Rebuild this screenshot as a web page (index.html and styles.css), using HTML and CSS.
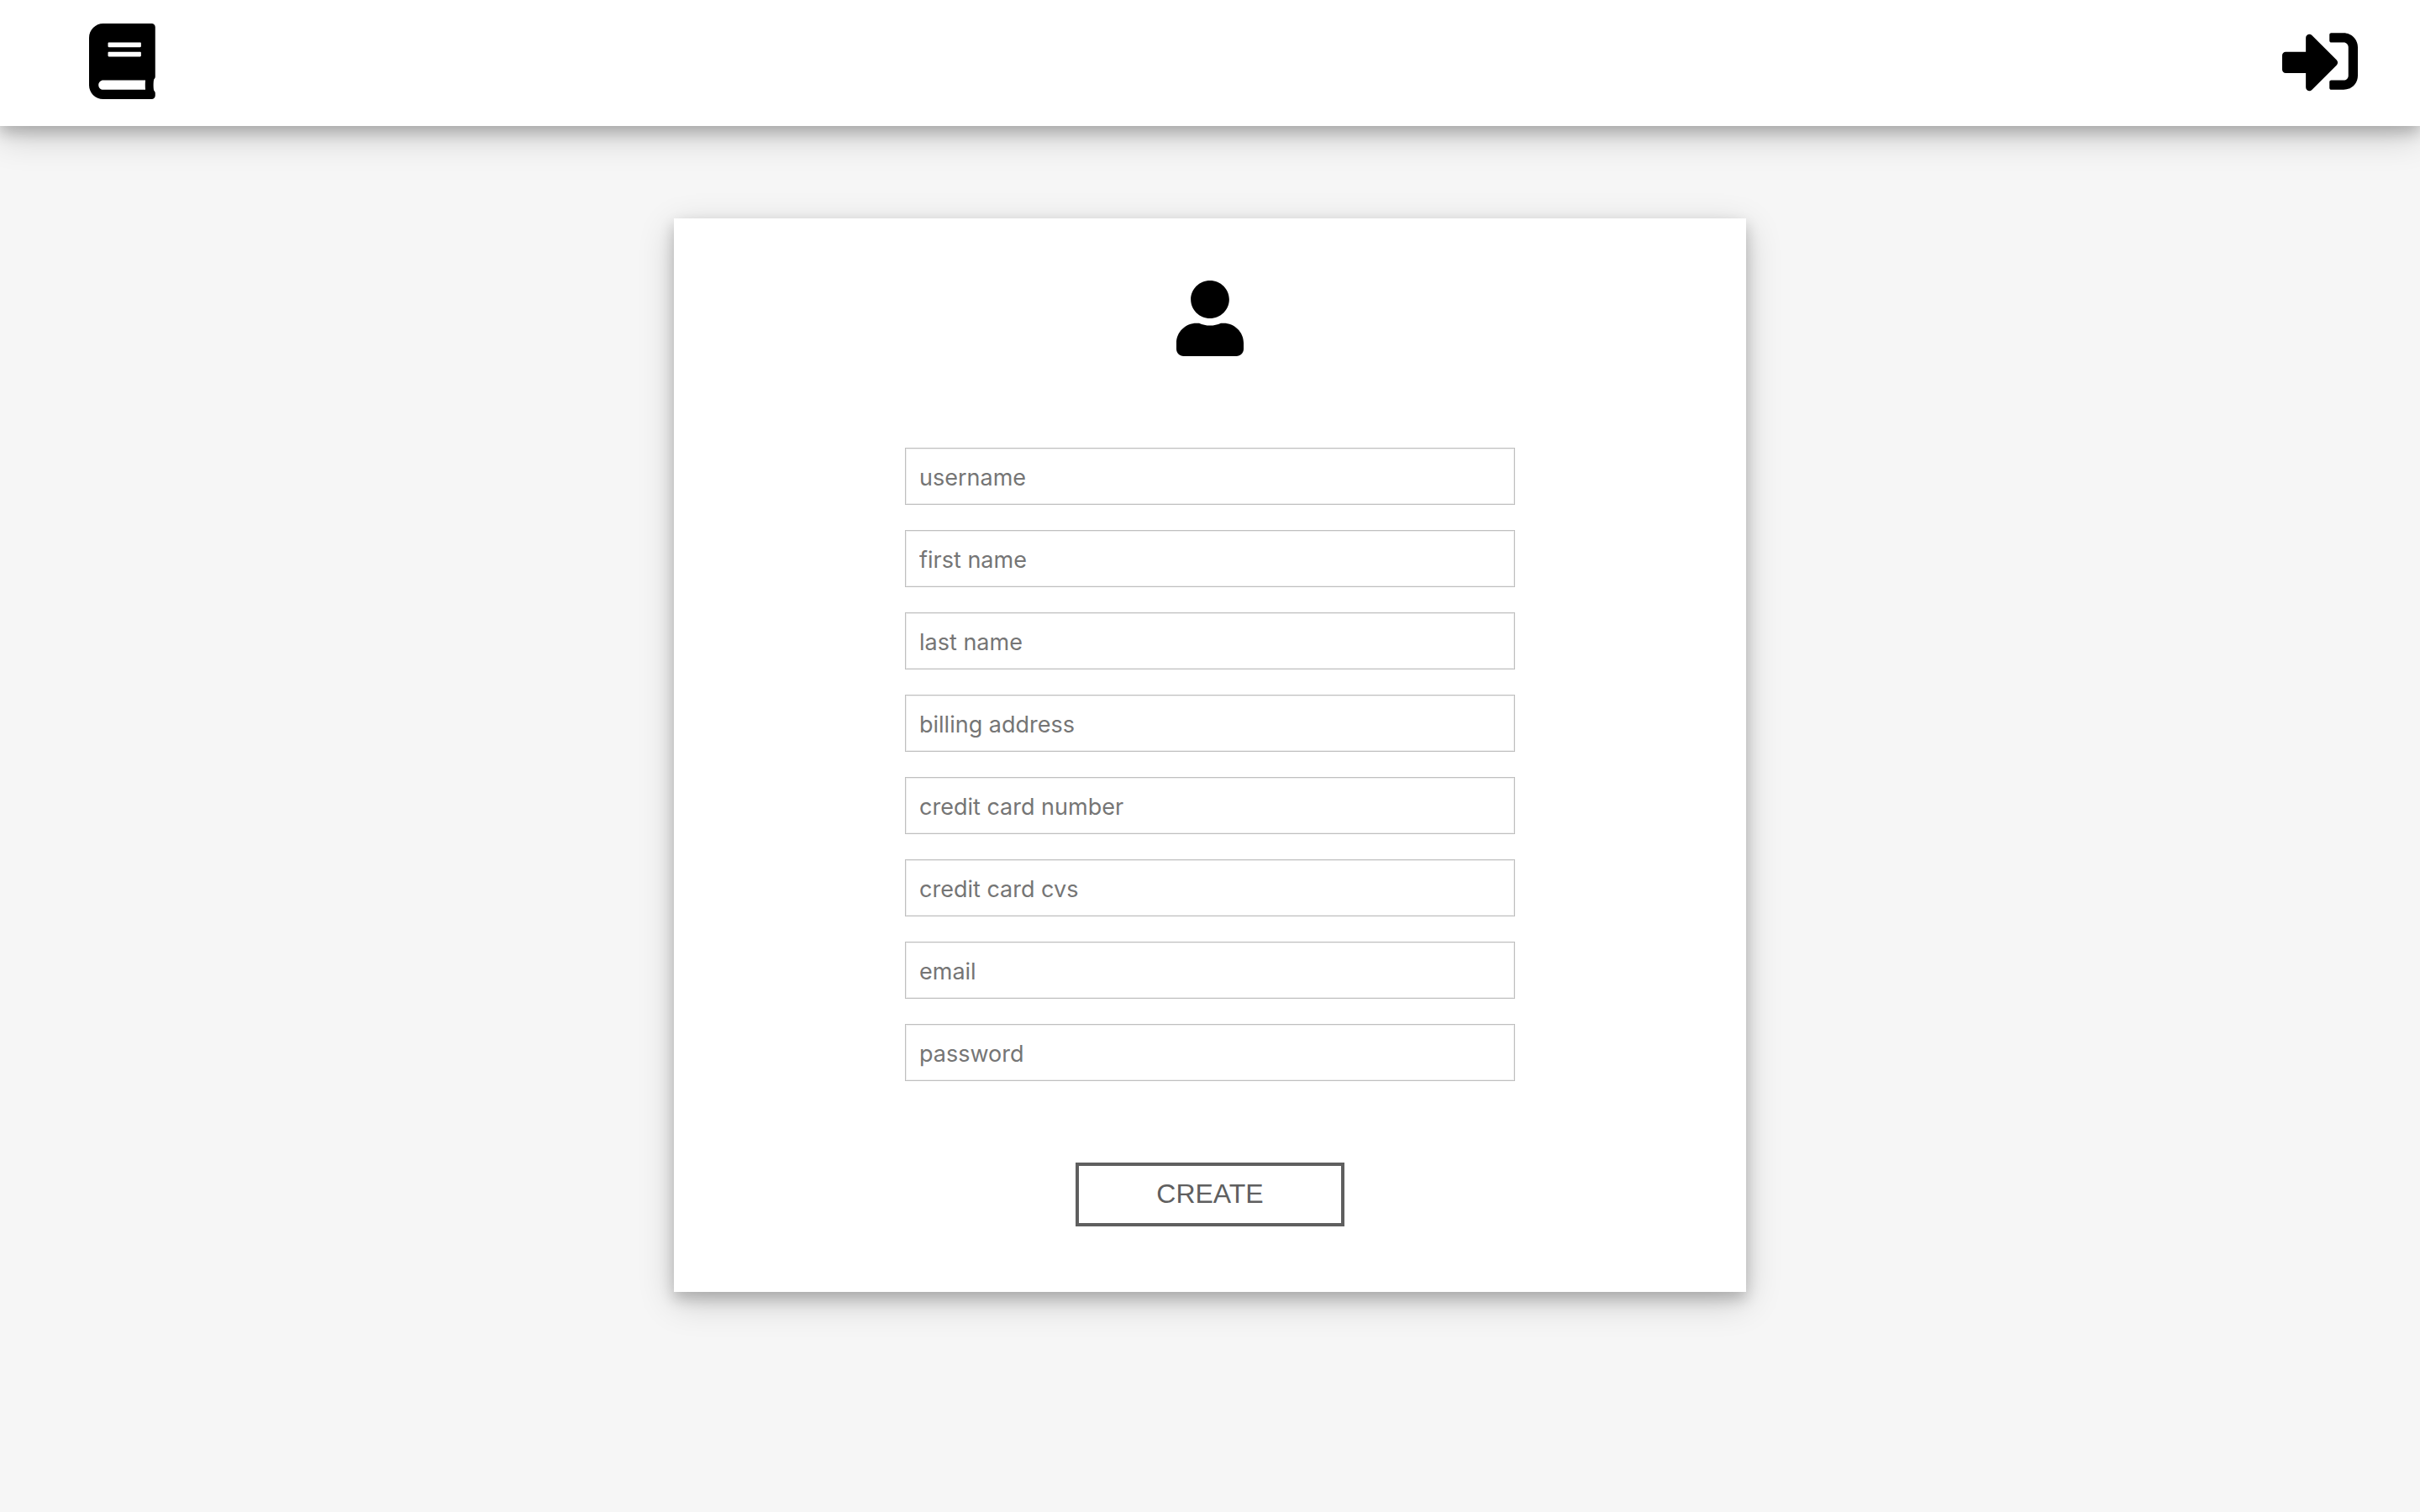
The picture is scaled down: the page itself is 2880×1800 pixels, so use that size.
FILE: index.html
```html
<!DOCTYPE html>
<html lang="en">
<head>
  <meta charset="utf-8">
  <meta name="viewport" content="width=device-width, initial-scale=1">
  <title>Create account</title>
  <link rel="stylesheet" href="styles.css">
</head>
<body>
  <header class="topbar">
    <a class="icon-link" href="#" aria-label="Home">
      <svg class="icon" viewBox="0 0 448 512" aria-hidden="true"><path d="M448 360V24c0-13.300-10.700-24-24-24H96C43 0 0 43 0 96v320c0 53 43 96 96 96h328c13.300 0 24-10.700 24-24v-16c0-7.500-3.500-14.300-8.900-18.700-4.200-15.400-4.200-59.300 0-74.700 5.400-4.300 8.900-11.100 8.900-18.600zM128 134c0-3.300 2.700-6 6-6h212c3.300 0 6 2.700 6 6v20c0 3.300-2.700 6-6 6H134c-3.300 0-6-2.700-6-6v-20zm0 64c0-3.300 2.700-6 6-6h212c3.300 0 6 2.700 6 6v20c0 3.300-2.700 6-6 6H134c-3.300 0-6-2.700-6-6v-20zm253.400 250H96c-17.700 0-32-14.300-32-32 0-17.600 14.400-32 32-32h285.400c-1.900 17.100-1.900 46.900 0 64z"/></svg>
    </a>
    <a class="icon-link" href="#" aria-label="Sign in">
      <svg class="icon" viewBox="0 0 512 512" aria-hidden="true"><path d="M416 448h-84c-6.600 0-12-5.400-12-12v-40c0-6.600 5.400-12 12-12h84c17.700 0 32-14.300 32-32V160c0-17.700-14.300-32-32-32h-84c-6.600 0-12-5.400-12-12V76c0-6.600 5.400-12 12-12h84c53 0 96 43 96 96v192c0 53-43 96-96 96zm-47-201L201 79c-15-15-41-4.500-41 17v96H24c-13.300 0-24 10.700-24 24v96c0 13.300 10.700 24 24 24h136v96c0 21.500 26 32 41 17l168-168c9.300-9.400 9.300-24.600 0-34z"/></svg>
    </a>
  </header>

  <main class="page">
    <form class="card">
      <svg class="icon avatar" viewBox="0 0 448 512" preserveAspectRatio="none" aria-hidden="true"><path d="M224 256c70.700 0 128-57.300 128-128S294.700 0 224 0 96 57.300 96 128s57.300 128 128 128zm89.600 32h-16.700c-22.200 10.200-46.900 16-72.900 16s-50.600-5.800-72.900-16h-16.700C60.200 288 0 348.200 0 422.400V464c0 26.500 21.500 48 48 48h352c26.500 0 48-21.500 48-48v-41.600c0-74.200-60.200-134.400-134.400-134.400z"/></svg>
      <div class="fields">
        <input class="field" type="text" name="username" placeholder="username" aria-label="username">
        <input class="field" type="text" name="first-name" placeholder="first name" aria-label="first name">
        <input class="field" type="text" name="last-name" placeholder="last name" aria-label="last name">
        <input class="field" type="text" name="billing-address" placeholder="billing address" aria-label="billing address">
        <input class="field" type="text" name="card-number" placeholder="credit card number" aria-label="credit card number">
        <input class="field" type="text" name="card-cvs" placeholder="credit card cvs" aria-label="credit card cvs">
        <input class="field" type="email" name="email" placeholder="email" aria-label="email">
        <input class="field" type="password" name="password" placeholder="password" aria-label="password">
      </div>
      <button class="create" type="submit">CREATE</button>
    </form>
  </main>
</body>
</html>
```
FILE: styles.css
```css
* {
  box-sizing: border-box;
}

body {
  margin: 0;
  background: #f6f6f6;
  font-family: "Liberation Sans", Arial, sans-serif;
}

.topbar,
.card {
  background: #fff;
  box-shadow: 0 8px 16px rgba(0, 0, 0, 0.2), 0 12px 40px rgba(0, 0, 0, 0.19);
}

.topbar {
  display: flex;
  justify-content: space-between;
  align-items: center;
  padding: 28px 74px 32px 106px;
}

.icon-link {
  display: flex;
  color: #000;
}

.icon {
  display: block;
  height: 90px;
  fill: #000;
}

.avatar {
  width: 80px;
}

.page {
  display: flex;
  justify-content: center;
  padding: 110px 32px;
}

.card {
  display: flex;
  flex-direction: column;
  align-items: center;
  width: 100%;
  max-width: 1276px;
  padding: 74px 32px 78px;
}

.fields {
  display: flex;
  flex-direction: column;
  gap: 30px;
  width: 100%;
  max-width: 726px;
  margin: 109px 0 97px;
}

.field {
  width: 100%;
  height: 68px;
  padding: 2px 16px 0;
  border: 1px solid #bfbfbf;
  border-radius: 0;
  background: #fff;
  box-shadow: inset 0 0 0 1px #eee;
  color: #000;
  font-family: Inter, sans-serif;
  font-size: 27px;
}

.field::placeholder {
  color: #757575;
}

.create {
  width: 320px;
  height: 76px;
  padding: 0 0 2px;
  border: 4px solid #5f5f5f;
  background: #fff;
  color: #5f5f5f;
  font-family: inherit;
  font-size: 32px;
}
```
